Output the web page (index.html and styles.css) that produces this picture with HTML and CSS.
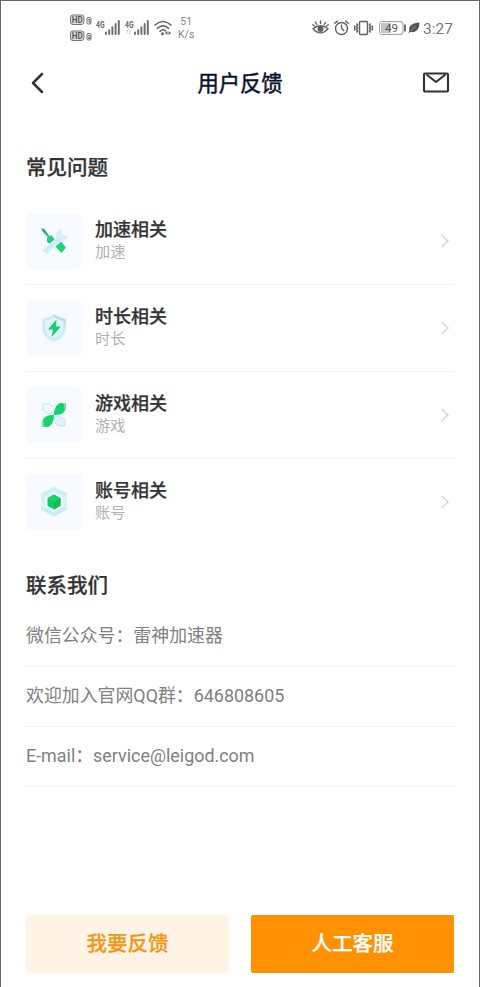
FILE: index.html
```html
<!DOCTYPE html>
<html lang="zh-CN">
<head>
<meta charset="utf-8">
<meta name="viewport" content="width=device-width, initial-scale=1">
<title>用户反馈</title>
<link rel="stylesheet" href="styles.css">
</head>
<body>
<div class="screen">
  <div class="status">
    <div class="status-left">
      <svg class="sim" width="22" height="29" viewBox="0 0 22 29">
        <rect x=".5" y="1" width="13.500" height="9.500" rx="2.500" fill="#ddd" stroke="#777"/>
        <text class="hd" x="1.700" y="9.100" textLength="11" lengthAdjust="spacingAndGlyphs">HD</text>
        <rect x="17" y="3.500" width="4" height="6.500" rx="1" fill="#eee" stroke="#777"/>
        <text class="sim-no" x="17.400" y="9">1</text>
        <rect x=".5" y="17" width="13.500" height="9.500" rx="2.500" fill="#ddd" stroke="#777"/>
        <text class="hd" x="1.700" y="25.100" textLength="11" lengthAdjust="spacingAndGlyphs">HD</text>
        <rect x="17" y="19.500" width="4" height="6.500" rx="1" fill="#eee" stroke="#777"/>
        <text class="sim-no" x="17.400" y="25">2</text>
      </svg>
      <svg class="signal" width="25" height="18" viewBox="0 0 25 18">
        <text class="net" x="0" y="8.500" textLength="8.500" lengthAdjust="spacingAndGlyphs">4G</text>
        <path d="M10 13.500v1.500M13.200 11.200v3.800M16.400 8.200v6.800M19.600 5v10M22.800 2v13" stroke="#6b6b6b" stroke-width="1.900" stroke-linecap="round"/>
      </svg>
      <svg class="signal" width="25" height="18" viewBox="0 0 25 18">
        <text class="net" x="0" y="8.500" textLength="8.500" lengthAdjust="spacingAndGlyphs">4G</text>
        <path d="M2 11v4M1 12l1-1 1 1M5 11v4M4 14l1 1 1-1" fill="none" stroke="#ccc" stroke-width=".8"/>
        <path d="M10 13.500v1.500M13.200 11.200v3.800M16.400 8.200v6.800M19.600 5v10M22.800 2v13" stroke="#6b6b6b" stroke-width="1.900" stroke-linecap="round"/>
      </svg>
      <svg class="wifi" width="18" height="16" viewBox="0 0 18 16">
        <path d="M1 5Q9-2 17 5M3.500 8.300Q9 3.300 14.500 8.300M6 11.300Q9 8.500 11.500 10.800" fill="none" stroke="#666" stroke-width="1.600" stroke-linecap="round"/>
        <circle cx="8.500" cy="13.700" r="1.500" fill="#666"/>
        <path d="M13.500 11l-2.500 2 2.500 2zM14.500 11l2.500 2-2.500 2z" fill="#666"/>
      </svg>
      <div class="speed"><span>51</span><span>K/s</span></div>
    </div>
    <div class="status-right">
      <svg width="17" height="16" viewBox="0 0 17 16" fill="none" stroke="#606060" stroke-width="1.400" stroke-linecap="round">
        <path d="M1 8.800Q8.500 2.500 16 8.800Q8.500 17 1 8.800zM8.500 3.500V1M4.800 4.500L3.500 2.300M12.200 4.500l1.300-2.200M2.500 6L.8 4.800M14.500 6l1.700-1.200"/>
        <circle cx="8.500" cy="9" r="2.300" fill="#606060"/>
      </svg>
      <svg width="15" height="16" viewBox="0 0 15 16" fill="none" stroke="#606060" stroke-width="1.400" stroke-linecap="round">
        <circle cx="7.500" cy="8.500" r="6"/><path d="M7.500 5v3.500l2.300 2M.8 3.300l2.600-2.200M14.200 3.300l-2.600-2.200"/>
      </svg>
      <svg width="19" height="16" viewBox="0 0 19 16" fill="none" stroke="#606060" stroke-width="1.400">
        <rect x="5.500" y="1.500" width="8" height="13" rx="1"/><path d="M2.500 3.500l1 1.500-1 1.500 1 1.500-1 1.500 1 1.500-1 1.500M.7 5.500v5M16.500 3.500l-1 1.500 1 1.500-1 1.500 1 1.500-1 1.500 1 1.500M18.300 5.500v5"/>
      </svg>
      <svg class="battery" width="27" height="14" viewBox="0 0 27 14">
        <rect x=".6" y=".6" width="23.400" height="12.800" rx="2" fill="#fff" stroke="#999"/>
        <rect x="2" y="2" width="10" height="10" fill="#c4c4c4"/>
        <path d="M26 3.500v7" stroke="#666" stroke-width="1.800"/>
        <text class="charge" x="6" y="10.900">49</text>
      </svg>
      <svg class="leaf" width="12" height="14" viewBox="0 0 12 14">
        <path d="M11.500 1.500C5 2 .5 4 1.200 9.500L.5 12.500l1.800-1.500C9 12 11.500 7 11.500 1.500z" fill="#555"/><path d="M2.500 10.200Q5 7 7.500 5.500" fill="none" stroke="#ddd" stroke-width=".5"/>
      </svg>
      <span class="time">3:27</span>
    </div>
  </div>

  <header class="header">
    <svg width="14" height="22" viewBox="0 0 14 22"><path d="M12 2L3 11l9 9" fill="none" stroke="#333" stroke-width="2.500" stroke-linecap="round" stroke-linejoin="round"/></svg>
    <h1>用户反馈</h1>
    <svg width="28" height="22" viewBox="0 0 28 22" fill="none" stroke="#333" stroke-width="2.100" stroke-linejoin="round"><rect x="2" y="1.500" width="24" height="18" rx="1"/><path d="M4.500 2.500l9.500 7.500 9.500-7.500"/></svg>
  </header>

  <main class="content">
    <h2>常见问题</h2>
    <ul class="topics">
      <li class="topic">
        <div class="tile">
          <svg width="32" height="32" viewBox="0 0 32 32">
            <path d="M3.500 3l3 1.300 5 6.700-1.500 1.200L4 6z" fill="#28b878"/>
            <path d="M9 13l4-3 4 4.500-3 4q-4 .5-5-2z" fill="#2bc783"/>
            <path d="M18.500 18l3.500-2.500 6 7-4.500 5.500-7-7.500z" fill="#16d973"/>
            <path d="M4.500 25L18 13q-1-5.500 3.500-8l2-.5-.5 4 3 2.500 3.500-1q0 6-6 6.500L9 29z" fill="#d8eef8"/>
            <path d="M7 26.500L22 13.500" stroke="#c9eaf3" stroke-width="2"/>
          </svg>
        </div>
        <div class="words"><h3>加速相关</h3><p>加速</p></div>
        <svg class="arrow" width="10" height="16" viewBox="0 0 10 16"><path d="M1.500 2L8 8l-6.500 6"/></svg>
      </li>
      <li class="topic">
        <div class="tile">
          <svg width="32" height="32" viewBox="0 0 32 32">
            <path d="M16 2q5 4 12 5v10q-1 9-12 13Q5 26 4 17V7q7-1 12-5z" fill="#d3eff5"/>
            <path d="M16 4q5 3.500 10 4.200V17q-1 7-10 10.500Q7 24 6 17V8.200Q11 7.500 16 4z" fill="#e0f5fa" stroke="#bfe6ee" stroke-width="1"/>
            <path d="M16 2q5 4 12 5v7l-3-5q-5-1-9-4z" fill="#a3dbe7" opacity=".6"/>
            <path d="M18.500 7.500L10 17.500h5l-1.500 7.500L23 14.500h-5z" fill="#16cd70"/>
          </svg>
        </div>
        <div class="words"><h3>时长相关</h3><p>时长</p></div>
        <svg class="arrow" width="10" height="16" viewBox="0 0 10 16"><path d="M1.500 2L8 8l-6.500 6"/></svg>
      </li>
      <li class="topic">
        <div class="tile">
          <svg width="32" height="32" viewBox="0 0 32 32">
            <path d="M5 5h6q5 2 5 10-8 0-11-4z" fill="#eefaff" stroke="#c3e5f0"/>
            <path d="M27 27h-6q-5-2-5-10 8 0 11 4z" fill="#dff2fa" stroke="#c3e5f0"/>
            <path d="M28 4h-6q-6 2.500-6 12 6 .5 9-2 3-3 3-6z" fill="#15d36f"/>
            <path d="M4 28h6q6-2.500 6-12-6-.5-9 2-3 3-3 6z" fill="#15d36f"/>
            <path d="M28 4h-4q3 1 2 7 2-2 2-4zM4 28h4q-3-1-2-7-2 2-2 4z" fill="#78dc91"/>
          </svg>
        </div>
        <div class="words"><h3>游戏相关</h3><p>游戏</p></div>
        <svg class="arrow" width="10" height="16" viewBox="0 0 10 16"><path d="M1.500 2L8 8l-6.500 6"/></svg>
      </li>
      <li class="topic">
        <div class="tile">
          <svg width="32" height="32" viewBox="0 0 32 32">
            <path d="M16 1l13 6.500v16L16 30.500 3 23.500v-16z" fill="#d9f2f8"/>
            <path d="M16 1l13 6.500-4 3.500-9-5-9 5-4-3.500z" fill="#cfeef5"/>
            <path d="M3 23.500l5-2.500 8 5 9-5 4 2.500-13 7z" fill="#c4edf5"/>
            <path d="M16 6l9 5v10l-9 5-9-5V11z" fill="#f7fdff"/>
            <path d="M16 8.500l6.500 3.700v7.600L16 23.500l-6.500-3.700v-7.600z" fill="#13c965"/>
            <path d="M16 8.500l6.500 3.700L16 16l-6.500-3.800z" fill="#19d26c"/>
            <path d="M16 16l6.500-3.800v7.600L16 23.500z" fill="#0fc05c"/>
          </svg>
        </div>
        <div class="words"><h3>账号相关</h3><p>账号</p></div>
        <svg class="arrow" width="10" height="16" viewBox="0 0 10 16"><path d="M1.500 2L8 8l-6.500 6"/></svg>
      </li>
    </ul>

    <h2>联系我们</h2>
    <ul class="contacts">
      <li>微信公众号：雷神加速器</li>
      <li>欢迎加入官网QQ群：646808605</li>
      <li>E-mail：service@leigod.com</li>
    </ul>
  </main>

  <footer class="actions">
    <button class="feedback">我要反馈</button>
    <button class="service">人工客服</button>
  </footer>
</div>
</body>
</html>
```
FILE: styles.css
```css
* { box-sizing: border-box; }
body, h1, h2, h3, p, ul { margin: 0; padding: 0; }
body { background: #fff; font-family: Roboto, "Noto Sans CJK SC", sans-serif; color: #333; }
ul { list-style: none; }
svg { display: block; flex: none; }

.screen {
  display: flex;
  flex-direction: column;
  height: 987px;
  border: 1px solid #666;
  border-bottom: 0;
}

.status {
  display: flex;
  justify-content: space-between;
  height: 54px;
  padding: 0 26px 0 69px;
}
.status-left, .status-right { display: flex; height: 54px; align-items: center; }
.status-left { gap: 4px; }
.hd { font: bold 9.500px Roboto, sans-serif; fill: #555; }
.sim-no { font: bold 6px Roboto, sans-serif; fill: #555; }
.net { font: bold 8.500px Roboto, sans-serif; fill: #666; }
.speed {
  display: flex;
  flex-direction: column;
  align-items: center;
  margin-left: 2px;
  font-size: 10.500px;
  line-height: 13px;
  color: #858585;
}
.status-right { gap: 5px; }
.battery { margin-left: 1px; }
.leaf { margin-left: -3px; }
.charge { font: 11.500px Roboto, sans-serif; fill: #555; }
.time { margin-left: -2px; padding-top: 2px; font-size: 15.500px; line-height: 20px; color: #777; }

.header {
  display: flex;
  align-items: center;
  justify-content: space-between;
  height: 56px;
  padding: 0 29px;
}
.header h1 {
  margin-left: 14px;
  padding-top: 1px;
  font-size: 21.300px;
  line-height: 30px;
  font-weight: 400;
  color: #0b1230;
  -webkit-text-stroke: .5px #0b1230;
}

.content { flex: 1; padding: 44px 25px 0; }
h2 {
  height: 26px;
  font-size: 20.500px;
  line-height: 26px;
  font-weight: 500;
  -webkit-text-stroke: .25px #333;
}

.topics { margin: 17px 0 30px; }
.topic {
  display: flex;
  align-items: flex-start;
  height: 87px;
  padding-top: 15px;
  border-bottom: 1px solid #f3f3f3;
}
.topic:last-child { height: 84px; border: 0; }
.tile {
  display: flex;
  align-items: center;
  justify-content: center;
  width: 56px;
  height: 56px;
  border-radius: 5px;
  background: #f7faff;
}
.words { flex: 1; padding: 5px 0 0 13px; }
.words h3 {
  font-size: 18px;
  line-height: 24px;
  font-weight: 500;
  -webkit-text-stroke: .25px #333;
}
.words p { font-size: 15.200px; line-height: 20px; color: #b0b0b0; }
.arrow { margin: 20px 4px 0 0; fill: none; stroke: #d6d6d6; stroke-width: 1.500; }

.contacts { margin-top: 8px; }
.contacts li {
  height: 60px;
  border-bottom: 1px solid #f3f3f3;
  font-size: 17.900px;
  line-height: 58px;
  color: #808080;
}

.actions { display: flex; gap: 22px; padding: 0 25px 14px; }
.actions button {
  flex: 1;
  height: 58px;
  padding: 0 0 4px;
  border: 0;
  border-radius: 2px;
  font-family: inherit;
  font-size: 20.500px;
  font-weight: 500;
}
.feedback { background: #fff3e5; color: #f09818; -webkit-text-stroke: .25px #f09818; }
.service { background: #ff9103; color: #fff; -webkit-text-stroke: .25px #fff; }
```
